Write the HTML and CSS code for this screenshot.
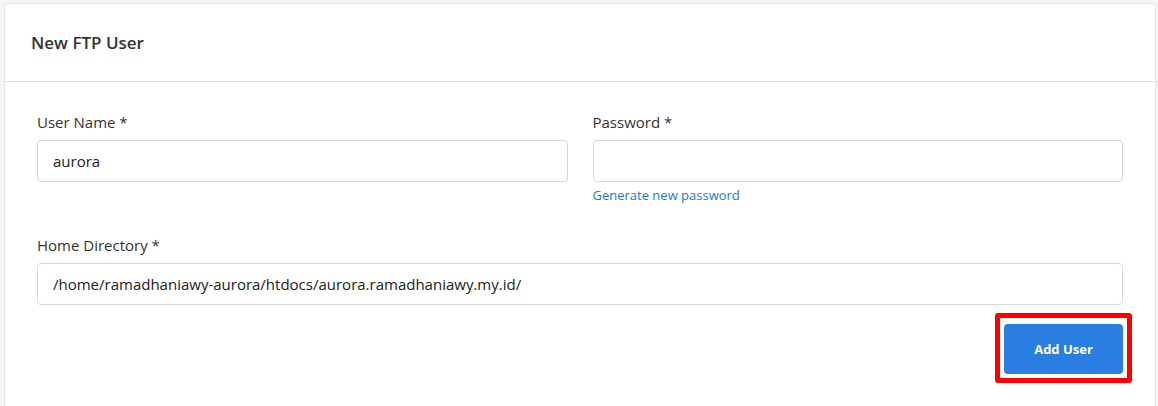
FILE: index.html
```html
<!DOCTYPE html>
<html lang="en">
<head>
<meta charset="UTF-8">
<meta name="viewport" content="width=device-width, initial-scale=1.0">
<title>New FTP User</title>
<link rel="stylesheet" href="styles.css">
</head>
<body>
<div class="card">
  <div class="card-header">
    <h2 class="card-title">New FTP User</h2>
  </div>
  <form class="card-body">
    <div class="form-row">
      <div class="form-group">
        <label for="username">User Name *</label>
        <input type="text" id="username" class="form-control" value="aurora">
      </div>
      <div class="form-group">
        <label for="password">Password *</label>
        <input type="password" id="password" class="form-control">
        <a href="#" class="help-link">Generate new password</a>
      </div>
    </div>
    <div class="form-group">
      <label for="homedir">Home Directory *</label>
      <input type="text" id="homedir" class="form-control" value="/home/ramadhaniawy-aurora/htdocs/aurora.ramadhaniawy.my.id/">
    </div>
    <div class="form-actions">
      <!-- highlight box drawn around the submit button -->
      <span class="highlight">
        <button type="button" class="btn-primary">Add User</button>
      </span>
    </div>
  </form>
</div>
</body>
</html>
```

FILE: styles.css
```css
html, body {
  margin: 0;
  padding: 0;
  font-family: 'Open Sans', 'Noto Sans', sans-serif;
  background-color: #f3f4f6;
  color: #333;
}

body {
  padding: 3px 2px 0 4px;
}

.card {
  background-color: white;
  border: 1px solid #e2e4e8;
  border-radius: 4px;
  min-height: 420px;
}

.card-header {
  height: 77px;
  display: flex;
  align-items: center;
  padding: 0 26px;
  border-bottom: 1px solid #dee1e5;
}

.card-title {
  margin: 0;
  font-size: 17px;
  font-weight: 600;
  color: #333;
}

.card-body {
  padding: 28px 32px 0 32px;
}

.form-row {
  display: grid;
  grid-template-columns: 1fr 1fr;
  column-gap: 25px;
  margin-bottom: 29px;
}

label {
  display: block;
  font-size: 15px;
  line-height: 24px;
  margin-bottom: 6px;
  color: #333;
}

.form-control {
  display: block;
  box-sizing: border-box;
  width: 100%;
  height: 42px;
  padding: 0 15px;
  border: 1px solid #d4d7dc;
  border-radius: 4px;
  font-family: inherit;
  font-size: 15px;
  color: #222;
  outline: none;
}

.help-link {
  display: block;
  margin-top: 4px;
  font-size: 13px;
  line-height: 18px;
  color: #1d78d6;
  text-decoration: none;
}

.form-actions {
  display: flex;
  justify-content: flex-end;
  margin-top: 8px;
  margin-right: -9px;
}

.highlight {
  display: flex;
  padding: 6px 4px 4px 4px;
  border: 5px solid #ff0000;
  border-radius: 3px;
}

.btn-primary {
  width: 119px;
  height: 50px;
  border: none;
  border-radius: 4px;
  background-color: #2a7de1;
  color: white;
  font-family: inherit;
  font-size: 13px;
  font-weight: 700;
}
```
